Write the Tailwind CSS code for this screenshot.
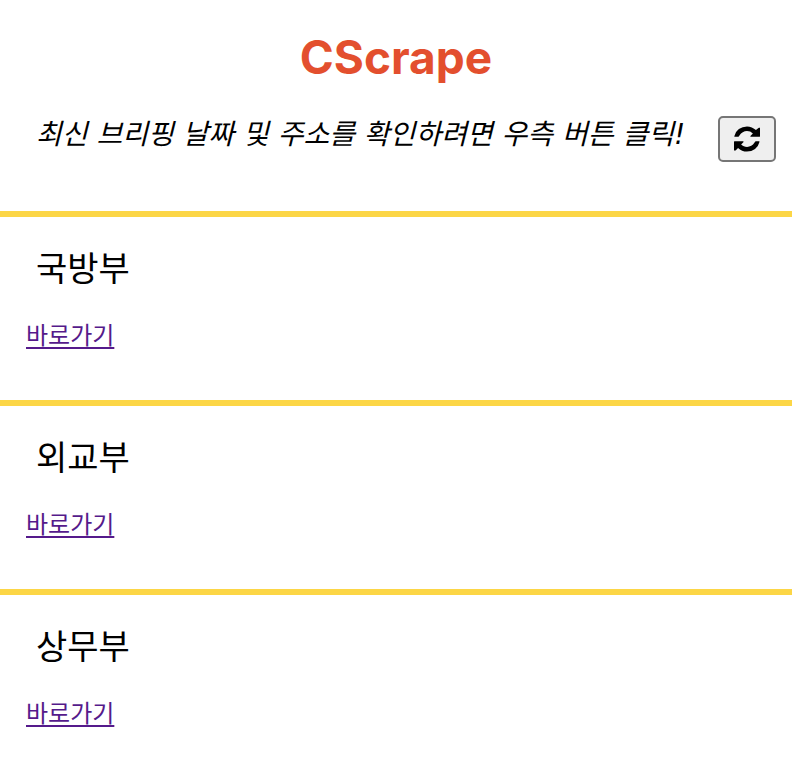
<!DOCTYPE html>
<html lang="ko">
<head>
<meta charset="utf-8">
<meta name="viewport" content="width=device-width, initial-scale=1">
<title>CScrape</title>
<script src="https://cdn.jsdelivr.net/npm/@tailwindcss/browser@4"></script>
</head>
<body class="bg-white font-['Inter','Noto_Sans_CJK_KR',sans-serif] text-black">
<header class="pt-7">
  <h1 class="text-center text-[46px] leading-[58px] font-bold text-[#e34f2e]">CScrape</h1>
  <div class="flex items-start justify-between pt-[30px] pr-4 pb-[49px] pl-9">
    <p class="font-['DejaVu_Sans','Noto_Sans_CJK_KR',sans-serif] text-[28px] leading-[38px] italic">최신 브리핑 날짜 및 주소를 확인하려면 우측 버튼 클릭!</p>
    <button type="button" aria-label="새로고침" class="flex h-[46px] w-[58px] shrink-0 items-center justify-center rounded-[5px] border-2 border-[#767676] bg-[#efefef]">
      <svg class="size-[26px]" viewBox="0 0 1536 1536" fill="currentColor" aria-hidden="true"><path d="M1511 928q0 5-1 7-64 268-268 421.500T764 1510q-146 0-282.500-55T238 1298l-129 129q-19 19-45 19H0V928q0-32 32-32h494q45 0 45 26 0 19-19 45L421 1098q71 66 161 102t187 36q134 0 250-65t186-179q11-17 53-73 8-23 30-23h192q31 0 31 32zM1536 110v498q0 32-32 32h-494q-45 0-45-26 0-19 19-45l131-131Q969 300 768 300q-134 0-250 65T332 544q-11 17-53 73-8 23-30 23H50q-32 0-32-32v-7q65-268 270-421.500T768 26q146 0 284 55.500T1297 238l130-109q19-19 45-19z"/></svg>
    </button>
  </div>
</header>
<main>
  <section class="border-t-6 border-[#fcd646] px-[26px] pt-7 pb-[46px]">
    <h2 class="pl-[10px] text-[34px] leading-12">국방부</h2>
    <a href="#defense" class="mt-[25px] block w-fit text-[24px] leading-9 text-[#551a8b] underline decoration-2 underline-offset-3">바로가기</a>
  </section>
  <section class="border-t-6 border-[#fcd646] px-[26px] pt-7 pb-[46px]">
    <h2 class="pl-[10px] text-[34px] leading-12">외교부</h2>
    <a href="#foreign" class="mt-[25px] block w-fit text-[24px] leading-9 text-[#551a8b] underline decoration-2 underline-offset-3">바로가기</a>
  </section>
  <section class="border-t-6 border-[#fcd646] px-[26px] pt-7 pb-[46px]">
    <h2 class="pl-[10px] text-[34px] leading-12">상무부</h2>
    <a href="#commerce" class="mt-[25px] block w-fit text-[24px] leading-9 text-[#551a8b] underline decoration-2 underline-offset-3">바로가기</a>
  </section>
</main>
</body>
</html>
